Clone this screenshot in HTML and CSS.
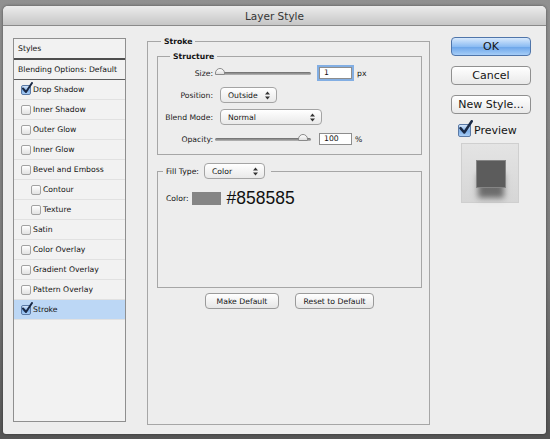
FILE: index.html
```html
<!DOCTYPE html>
<html>
<head>
<meta charset="utf-8">
<link rel="stylesheet" href="styles.css">
</head>
<body>
<div class="window">
  <div class="titlebar">Layer Style</div>
  <div class="content">
    <ul class="styles-list">
      <li class="list-head">Styles</li>
      <li class="list-blend">Blending Options: Default</li>
      <li class="list-item"><span class="cb checked"><svg class="check" viewBox="0 0 12 12" width="12" height="12"><path d="M2 6.5 L5 10 L11 1" fill="none" stroke="#1b2a46" stroke-width="2" stroke-linecap="round" stroke-linejoin="round"/></svg></span>Drop Shadow</li>
      <li class="list-item"><span class="cb"></span>Inner Shadow</li>
      <li class="list-item"><span class="cb"></span>Outer Glow</li>
      <li class="list-item"><span class="cb"></span>Inner Glow</li>
      <li class="list-item"><span class="cb"></span>Bevel and Emboss</li>
      <li class="list-item sub"><span class="cb"></span>Contour</li>
      <li class="list-item sub"><span class="cb"></span>Texture</li>
      <li class="list-item"><span class="cb"></span>Satin</li>
      <li class="list-item"><span class="cb"></span>Color Overlay</li>
      <li class="list-item"><span class="cb"></span>Gradient Overlay</li>
      <li class="list-item"><span class="cb"></span>Pattern Overlay</li>
      <li class="list-item selected"><span class="cb checked"><svg class="check" viewBox="0 0 12 12" width="12" height="12"><path d="M2 6.5 L5 10 L11 1" fill="none" stroke="#1b2a46" stroke-width="2" stroke-linecap="round" stroke-linejoin="round"/></svg></span>Stroke</li>
    </ul>

    <fieldset class="group group-stroke">
      <legend class="group-title title-stroke">Stroke</legend>
      <fieldset class="group group-structure">
        <legend class="group-title title-structure">Structure</legend>
        <div class="row">
          <span class="label">Size:</span>
          <div class="slider"><span class="thumb thumb-min"></span></div>
          <span class="field focus">1</span>
          <span class="unit">px</span>
        </div>
        <div class="row">
          <span class="label">Position:</span>
          <span class="select select-position">Outside<svg class="arrows" viewBox="0 0 5 9" width="5" height="9"><path d="M0 3.5 L2.5 0.5 L5 3.5 Z M0 5.5 L2.5 8.5 L5 5.5 Z" fill="#333"/></svg></span>
        </div>
        <div class="row">
          <span class="label">Blend Mode:</span>
          <span class="select select-blend">Normal<svg class="arrows" viewBox="0 0 5 9" width="5" height="9"><path d="M0 3.5 L2.5 0.5 L5 3.5 Z M0 5.5 L2.5 8.5 L5 5.5 Z" fill="#333"/></svg></span>
        </div>
        <div class="row">
          <span class="label">Opacity:</span>
          <div class="slider"><span class="thumb thumb-max"></span></div>
          <span class="field">100</span>
          <span class="unit unit-pct">%</span>
        </div>
      </fieldset>

      <fieldset class="group group-fill">
        <legend class="fill-legend">Fill Type:<span class="select select-fill">Color<svg class="arrows" viewBox="0 0 5 9" width="5" height="9"><path d="M0 3.5 L2.5 0.5 L5 3.5 Z M0 5.5 L2.5 8.5 L5 5.5 Z" fill="#333"/></svg></span></legend>
        <div class="color-row">
          <span class="color-label">Color:</span>
          <span class="swatch"></span>
          <span class="hex">#858585</span>
        </div>
      </fieldset>

      <div class="defaults">
        <span class="btn-small btn-make">Make Default</span>
        <span class="btn-small btn-reset">Reset to Default</span>
      </div>
    </fieldset>

    <div class="side">
      <span class="btn btn-ok">OK</span>
      <span class="btn">Cancel</span>
      <span class="btn">New Style...</span>
      <div class="preview-row">
        <span class="cb cb-large checked"><svg class="check check-large" viewBox="0 0 12 12" width="15" height="15"><path d="M2 6.5 L5 10 L11 1" fill="none" stroke="#1b2a46" stroke-width="2" stroke-linecap="round" stroke-linejoin="round"/></svg></span>
        <span class="preview-label">Preview</span>
      </div>
      <div class="thumbnail"><span class="thumb-square"></span></div>
    </div>
  </div>
</div>
</body>
</html>
```

FILE: styles.css
```css
html, body {
  margin: 0;
  padding: 0;
}
body {
  width: 550px;
  height: 439px;
  overflow: hidden;
  background: linear-gradient(#909090, #7a7a7a 60%, #555555);
  font-family: "DejaVu Sans", sans-serif;
  color: #141414;
}
.window {
  margin: 6px 0 0 3px;
  width: 543px;
  height: 428px;
  background: #ededed;
  border-radius: 5px 5px 3px 3px;
  box-shadow: 0 0 3px rgba(0,0,0,0.45);
  overflow: hidden;
}
.titlebar {
  height: 19px;
  border-bottom: 1px solid #8a8a8a;
  background: linear-gradient(#ececec, #c6c6c6);
  text-align: center;
  font-size: 10.5px;
  line-height: 20px;
  color: #353535;
}
.content {
  display: flex;
  align-items: flex-start;
  padding-left: 10px;
}

/* left list */
.styles-list {
  list-style: none;
  margin: 12px 0 0;
  padding: 0;
  width: 113px;
  height: 384px;
  box-sizing: border-box;
  border: 1px solid #8f8f8f;
  background: #f2f2f2;
  font-size: 7.7px;
}
.list-head, .list-blend, .list-item {
  box-sizing: border-box;
  display: flex;
  align-items: center;
}
.list-head {
  height: 21px;
  padding-left: 4px;
  border-bottom: 2px solid #4e4e4e;
}
.list-blend {
  height: 20px;
  padding-left: 4px;
  border-bottom: 1px solid #5c5c5c;
}
.list-item {
  height: 20px;
  border-bottom: 1px solid #e1e1e1;
}
.list-item.selected {
  background: #bcd7f5;
}
.cb {
  position: relative;
  flex: none;
  width: 10px;
  height: 10px;
  box-sizing: border-box;
  margin: 0 2px 0 7px;
  border: 1px solid #a2a2a2;
  border-radius: 2px;
  background: linear-gradient(#ffffff, #e2e2e2);
}
.sub .cb {
  margin-left: 17px;
}
.cb.checked {
  border-color: #5b7aa6;
  background: linear-gradient(#d5e6fa, #7eb0ea 55%, #a9cdf5);
}
.check {
  position: absolute;
  left: -1px;
  top: -4px;
}

/* group boxes */
.group {
  margin: 0;
  min-width: 0;
  box-sizing: border-box;
  border: 1px solid #a6a6a6;
}
.group-title {
  font-weight: bold;
  font-size: 7.7px;
  line-height: 11px;
  padding: 0 3px;
}
.group-stroke {
  margin: 10px 0 0 21px;
  width: 283px;
  height: 389px;
  padding: 4px 7px 0 9px;
}
.title-stroke {
  margin-left: 4px;
}
.group-structure {
  padding: 0 0 4px 0;
}
.title-structure {
  margin-left: 12px;
}
.row {
  display: flex;
  align-items: center;
  height: 22px;
  font-size: 7.7px;
}
.label {
  width: 55px;
  margin-right: 2px;
  text-align: right;
  color: #1c1c1c;
}
.slider {
  position: relative;
  width: 96px;
  height: 3px;
  border-radius: 2px;
  background: linear-gradient(#6a6a6a, #b9b9b9);
}
.thumb {
  position: absolute;
  top: -4px;
  width: 10px;
  height: 7px;
  box-sizing: border-box;
  border: 1px solid #8a8a8a;
  border-radius: 5px 5px 1px 1px;
  background: linear-gradient(#ffffff, #e0e0e0);
}
.thumb-min { left: 0; }
.thumb-max { left: 83px; }
.field {
  width: 33px;
  height: 12px;
  box-sizing: border-box;
  margin-left: 8px;
  padding-left: 4px;
  border: 1px solid #8d8d8d;
  background: #ffffff;
  line-height: 10px;
}
.field.focus {
  box-shadow: 0 0 0 2px #82aee3;
}
.unit {
  margin-left: 5px;
}
.unit-pct {
  margin-left: 3px;
}
.select {
  height: 16px;
  box-sizing: border-box;
  margin-left: 5px;
  padding: 0 6px 0 7px;
  display: flex;
  align-items: center;
  justify-content: space-between;
  border: 1px solid #a4a4a4;
  border-radius: 4px;
  background: linear-gradient(#ffffff, #e9e9e9);
  font-size: 7.7px;
  font-weight: normal;
}
.select-position { width: 57px; }
.select-blend { width: 102px; }
.select-fill { width: 61px; }

.group-fill {
  margin-top: 8px;
  height: 125px;
  padding: 12px 0 0 0;
}
.fill-legend {
  display: flex;
  align-items: center;
  margin-left: 5px;
  padding: 0 6px 0 3px;
  font-size: 7.7px;
}
.color-row {
  display: flex;
  align-items: center;
  height: 14px;
  margin-left: 8px;
  font-size: 7.7px;
}
.swatch {
  width: 29px;
  height: 13px;
  margin-left: 3px;
  background: #858585;
}
.hex {
  margin-left: 6px;
  font-family: "Liberation Sans", Arial, sans-serif;
  font-size: 17.5px;
  color: #111;
}
.defaults {
  display: flex;
  justify-content: center;
  gap: 16px;
  margin-top: 5px;
}
.btn-small {
  height: 16px;
  box-sizing: border-box;
  display: flex;
  align-items: center;
  justify-content: center;
  border: 1px solid #9a9a9a;
  border-radius: 4px;
  background: linear-gradient(#ffffff, #e6e6e6);
  font-size: 7.7px;
}
.btn-make { width: 74px; }
.btn-reset { width: 79px; }

/* right column */
.side {
  margin: 11px 0 0 21px;
  width: 80px;
  display: flex;
  flex-direction: column;
}
.btn {
  width: 80px;
  height: 19px;
  box-sizing: border-box;
  margin-bottom: 10px;
  display: flex;
  align-items: center;
  justify-content: center;
  border: 1px solid #909090;
  border-radius: 4px;
  background: linear-gradient(#ffffff, #e9e9e9);
  font-size: 11px;
}
.btn-ok {
  border-color: #4f75aa;
  background: linear-gradient(#d8e9fc, #8dbdf3 50%, #6ea7ea 55%, #a6cdf7);
}
.preview-row {
  display: flex;
  align-items: center;
  margin: -1px 0 0 7px;
  height: 14px;
}
.cb-large {
  width: 13px;
  height: 13px;
  margin: 0 3px 0 0;
}
.check-large {
  left: -1px;
  top: -5px;
}
.preview-label {
  font-size: 11px;
}
.thumbnail {
  margin: 6px 0 0 10px;
  width: 58px;
  height: 60px;
  box-sizing: border-box;
  border: 1px solid #cfcfcf;
  background: linear-gradient(#e4e4e4, #d6d6d6);
  padding: 16px 0 0 14px;
}
.thumb-square {
  display: block;
  width: 30px;
  height: 28px;
  box-sizing: border-box;
  border: 1px solid #858585;
  background: #5c5c5c;
  box-shadow: 0 12px 6px -2px rgba(0,0,0,0.5);
}
```
